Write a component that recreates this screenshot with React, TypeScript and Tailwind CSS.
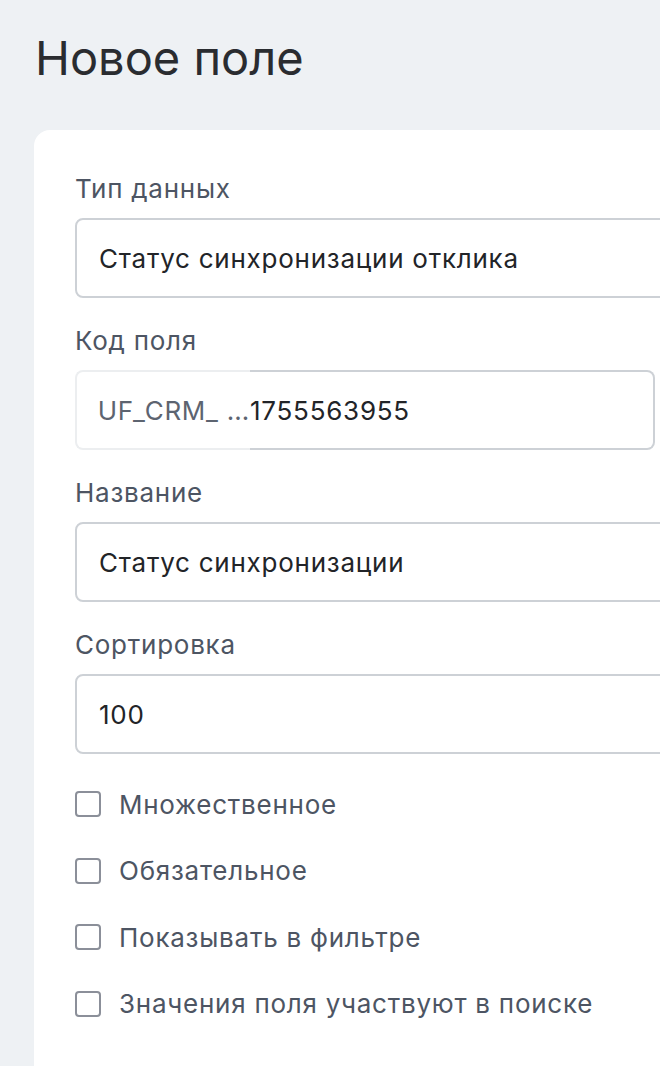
export default function App() {
  const checks = [
    "Множественное",
    "Обязательное",
    "Показывать в фильтре",
    "Значения поля участвуют в поиске",
  ];

  return (
    <div
      className="min-h-[1066px] bg-[#eef1f4] pl-[34px] overflow-hidden"
      style={{ fontFamily: "Inter, 'Liberation Sans', sans-serif" }}
    >
      <h1 className="pt-[26px] pl-px text-[47px] leading-[64px] text-[#2a2c30]">
        Новое поле
      </h1>

      <div className="mt-[40px] w-[700px] min-h-[940px] rounded-tl-[16px] bg-white pl-[41px] pt-[40px] tracking-[0.75px]">
        <Field label="Тип данных">
          <Input value="Статус синхронизации отклика" />
        </Field>

        <Field label="Код поля">
          <div className="flex h-[80px] w-[580px] text-[26px]">
            <div className="flex items-center justify-end w-[175px] rounded-l-[8px] border-2 border-r-0 border-[#eceef0] text-[#5d6470] whitespace-nowrap">
              UF_CRM_ …
            </div>
            <div className="flex-1 flex items-center rounded-r-[8px] border-2 border-l-0 border-[#cdd1d6] text-[#222428]">
              1755563955
            </div>
          </div>
        </Field>

        <Field label="Название">
          <Input value="Статус синхронизации" />
        </Field>

        <Field label="Сортировка">
          <Input value="100" />
        </Field>

        <div className="-mt-[7px] flex flex-col">
          {checks.map((c) => (
            <label key={c} className="flex items-center h-[66.5px] gap-[18px]">
              <span className="w-[26px] h-[26px] rounded-[4px] border-2 border-[#8b8f99] bg-white" />
              <span className="text-[26px] text-[#4d5563]">{c}</span>
            </label>
          ))}
        </div>
      </div>
    </div>
  );
}

function Input({ value }: { value: string }) {
  return (
    <div className="h-[80px] w-[600px] rounded-[8px] border-2 border-[#cdd1d6] flex items-center px-[22px] text-[26px] text-[#222428]">
      {value}
    </div>
  );
}

function Field({ label, children }: { label: string; children: React.ReactNode }) {
  return (
    <div className="mb-[24px]">
      <div className="pt-[3px] text-[26px] leading-[32px] text-[#4d5563] mb-[13px]">{label}</div>
      {children}
    </div>
  );
}
